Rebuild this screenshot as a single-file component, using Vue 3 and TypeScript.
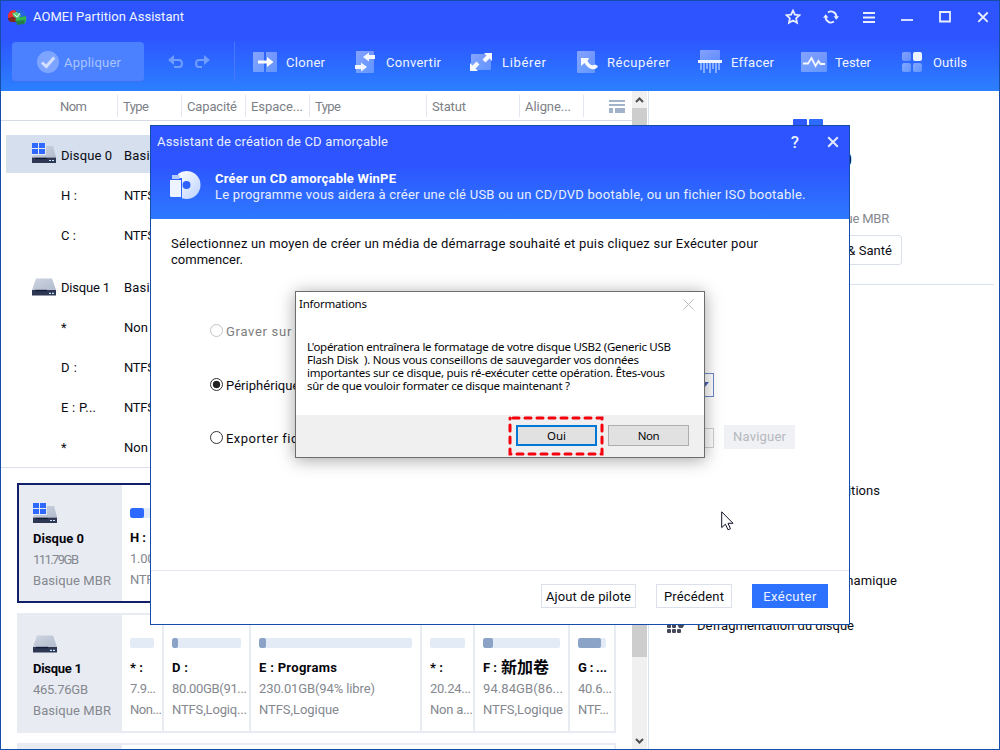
<script setup lang="ts">
import type { ObjectDirective } from 'vue'

/* Spreads a label over the given width through its letter spacing. */
const vFit: ObjectDirective<HTMLElement, number> = {
  mounted(el, binding) {
    if (!binding.value) return
    const count = (el.textContent ?? '').length
    const natural = el.getBoundingClientRect().width
    el.style.letterSpacing = `${(binding.value - natural) / Math.max(count - 1, 1)}px`
  },
}

interface Tool { id: string; label: string; w: number }
const tools: Tool[] = [
  { id: 'clone', label: 'Cloner', w: 39 },
  { id: 'convert', label: 'Convertir', w: 55 },
  { id: 'free', label: 'Libérer', w: 44 },
  { id: 'recover', label: 'Récupérer', w: 63 },
  { id: 'wipe', label: 'Effacer', w: 43 },
  { id: 'test', label: 'Tester', w: 36 },
  { id: 'tools', label: 'Outils', w: 34 },
]

interface Column { label: string; w: number }
const columns: Column[] = [
  { label: 'Nom', w: 27 },
  { label: 'Type', w: 26 },
  { label: 'Capacité', w: 50 },
  { label: 'Espace...', w: 52 },
  { label: 'Type', w: 26 },
  { label: 'Statut', w: 34 },
  { label: 'Aligne...', w: 46 },
]

interface Row { kind: string; name: string; nw: number; type: string; tw: number }
const rows: Row[] = [
  { kind: 'system', name: 'Disque 0', nw: 51, type: 'Basique MBR', tw: 79 },
  { kind: 'volume', name: 'H :', nw: 16, type: 'NTFS', tw: 31 },
  { kind: 'volume', name: 'C :', nw: 15, type: 'NTFS', tw: 31 },
  { kind: 'disk', name: 'Disque 1', nw: 49, type: 'Basique MBR', tw: 79 },
  { kind: 'volume', name: '*', nw: 0, type: 'Non formaté', tw: 73 },
  { kind: 'volume', name: 'D :', nw: 16, type: 'NTFS', tw: 31 },
  { kind: 'volume', name: 'E : P...', nw: 35, type: 'NTFS', tw: 31 },
  { kind: 'volume', name: '*', nw: 0, type: 'Non formaté', tw: 73 },
]

interface Part { name: string; cjk?: string; nw: number; size: string; sw: number; fs: string; fw: number; used: number }
interface Disk { name: string; nw: number; size: string; sw: number; system: boolean; parts: Part[] }
const disks: Disk[] = [
  {
    name: 'Disque 0', nw: 51, size: '111.79GB', sw: 46, system: true,
    parts: [{ name: 'H :', nw: 16, size: '1.00GB', sw: 41, fs: 'NTFS', fw: 31, used: 14 }],
  },
  {
    name: 'Disque 1', nw: 49, size: '465.76GB', sw: 55, system: false,
    parts: [
      { name: '* :', nw: 13, size: '7.9...', sw: 26, fs: 'Non...', fw: 32, used: 0 },
      { name: 'D :', nw: 16, size: '80.00GB(91...', sw: 75, fs: 'NTFS,Logiq...', fw: 75, used: 6 },
      { name: 'E : Programs', nw: 78, size: '230.01GB(94% libre)', sw: 116, fs: 'NTFS,Logique', fw: 80, used: 7 },
      { name: '* :', nw: 13, size: '20.24...', sw: 41, fs: 'Non a...', fw: 43, used: 0 },
      { name: 'F :', cjk: '新加卷', nw: 14, size: '94.84GB(86...', sw: 80, fs: 'NTFS,Logique', fw: 80, used: 10 },
      { name: 'G : ...', nw: 29, size: '40.6...', sw: 34, fs: 'NTF...', fw: 31, used: 23 },
    ],
  },
]

interface Line { text: string; w: number }
const message: Line[] = [
  { text: "L'opération entraînera le formatage de votre disque USB2 (Generic USB", w: 364 },
  { text: 'Flash Disk\u00a0 ). Nous vous conseillons de sauvegarder vos données', w: 332 },
  { text: 'importantes sur ce disque, puis ré-exécuter cette opération. Êtes-vous', w: 358 },
  { text: 'sûr de que vouloir formater ce disque maintenant ?', w: 263 },
]
</script>

<template>
  <div class="window">
    <svg class="defs" width="0" height="0">
      <defs>
        <linearGradient id="soft" x1="0" y1="0" x2="1" y2="1">
          <stop offset="0" stop-color="#fff" stop-opacity=".42" />
          <stop offset="1" stop-color="#fff" stop-opacity=".26" />
        </linearGradient>
        <linearGradient id="metal" x1="0" y1="0" x2="1" y2="1">
          <stop offset="0" stop-color="#ced5e1" />
          <stop offset="1" stop-color="#b2bccd" />
        </linearGradient>
        <linearGradient id="disc" x1="0" y1="0" x2="1" y2="1">
          <stop offset="0" stop-color="#fff" />
          <stop offset="1" stop-color="#b9d0ff" />
        </linearGradient>
        <symbol id="drive" viewBox="0 0 24 20">
          <path d="M4 2.5H20L24 14H0Z" fill="url(#metal)" />
          <path d="M0 14H24V19.5H0Z" fill="#2e3852" />
          <path d="M3 14.5H15" stroke="#141d38" stroke-width="1.4" />
          <path d="M17 17.3H19M20 17.3H22" stroke="#c5eaff" stroke-width="1.2" />
        </symbol>
        <symbol id="sysdrive" viewBox="0 0 24 20">
          <path d="M10 3H21L24 14H0L3 10Z" fill="url(#metal)" />
          <path d="M0 14.5H24V20H0Z" fill="#2e3852" />
          <path d="M3 15.5H15" stroke="#141d38" stroke-width="1.2" />
          <path d="M17 17.5H19M20 17.5H22" stroke="#c5eaff" stroke-width="1.2" />
          <path d="M0 0H14V12H0Z" fill="#e4eaf4" />
          <path d="M0 0H6V5H0ZM7 0H13V5H7ZM0 6H6V11H0ZM7 6H13V11H7Z" fill="#2f68ff" />
        </symbol>
      </defs>
    </svg>

    <header class="top">
      <div class="titlebar">
        <svg class="logo" width="20" height="17" viewBox="0 0 20 17">
          <path d="M1 9Q0 3 6 1L10 2 9 8Z" fill="#f0302c" />
          <path d="M1 9L9 7 9 13H4Q1 12 1 9Z" fill="#832a20" />
          <path d="M9 1Q17-1 19 7L13 9 9 5Z" fill="#2868dc" />
          <path d="M10 9L19 7Q20 13 17 15H11L8 11Z" fill="#31b54c" />
          <path d="M9 12L18 11 17 15 10 16Z" fill="#247b4c" />
          <path d="M5 4L10 3 14 6 11 10 7 8Z" fill="#5ccd79" />
          <path d="M7 5L10 8 13 4" fill="none" stroke="#dff2ff" />
        </svg>
        <span v-fit="151" class="t">AOMEI Partition Assistant</span>
        <div class="controls">
          <svg viewBox="0 0 16 16"><path d="M8 1.6L9.9 5.7 14.4 6.2 11.1 9.3 12 13.8 8 11.5 4 13.8 4.9 9.3 1.6 6.2 6.1 5.7Z" /></svg>
          <svg viewBox="0 0 16 16"><path d="M5 3.4A5.4 5.4 0 0 1 13.4 8M11 12.6A5.4 5.4 0 0 1 2.6 8" /><path class="solid" d="M10.6 7.2H16L13.3 10.8ZM5.4 8.8H0L2.7 5.2Z" /></svg>
          <svg viewBox="0 0 16 16"><path d="M2 4H14M2 8.5H14M2 13H14" /></svg>
          <svg viewBox="0 0 16 16"><path d="M2 11H14" /></svg>
          <svg viewBox="0 0 16 16"><path d="M3 3H13V12.5H3Z" /></svg>
          <svg viewBox="0 0 16 16"><path d="M3.3 3.5L12.7 12.9M12.7 3.5L3.3 12.9" /></svg>
        </div>
      </div>

      <div class="toolbar">
        <div class="apply">
          <svg width="22" height="22" viewBox="0 0 22 22">
            <circle cx="11" cy="11" r="11" fill="#fff" opacity=".28" />
            <path d="M5 11.5L9.3 15.5 17.2 6.5" fill="none" stroke="#d3e0ff" stroke-width="3" />
          </svg>
          <span v-fit="57" class="t">Appliquer</span>
        </div>
        <svg class="undo" width="43" height="14" viewBox="0 0 43 14">
          <g fill="none" stroke="#6f9cff" stroke-width="2">
            <path d="M3 5H11Q14 5 14 8.5T11 12H6" />
            <path d="M38 5H31Q28 5 28 8.5T31 12H34" />
          </g>
          <path d="M0 5L6 0V10ZM42 5L36 0V10Z" fill="#6f9cff" />
        </svg>
        <i class="sep"></i>
        <div v-for="tool in tools" :key="tool.id" :class="['tool', tool.id]">
          <svg v-if="tool.id === 'clone'" width="24" height="24" viewBox="0 0 24 24">
            <path d="M1 2H11V22H1Q0 22 0 21V3Q0 2 1 2ZM13 2H23Q24 2 24 3V21Q24 22 23 22H13Z" fill="url(#soft)" />
            <path d="M5 10.5H14V7L20.5 12 14 17V13.5H5Z" fill="#fff" />
          </svg>
          <svg v-else-if="tool.id === 'convert'" width="20" height="24" viewBox="0 0 20 24">
            <rect x="1" y="1" width="18" height="22" rx="1" fill="url(#soft)" />
            <path d="M8 7L14 2.5V5H20V9H14V11.5ZM12 17L6 12.5V15H0V19H6V21.5Z" fill="#f4f7ff" />
          </svg>
          <svg v-else-if="tool.id === 'free'" width="22" height="24" viewBox="0 0 22 24">
            <rect x="1" y="4" width="20" height="16" rx="1" fill="url(#soft)" />
            <path d="M14 3H22V11L19.5 8.5 15.5 12.5 12.5 9.5 16.5 5.5ZM0 13V21H8L5.5 18.5 9.5 14.5 6.5 11.5 2.5 15.5Z" fill="#f6f9ff" />
          </svg>
          <svg v-else-if="tool.id === 'recover'" width="21" height="24" viewBox="0 0 21 24">
            <rect x="0" y="1" width="18" height="22" rx="1" fill="url(#soft)" />
            <path d="M4 8H12L10.5 11Q14 17 18 14.5L21 16Q19 20 14.5 19 10.5 18 7.5 13L4 16Z" fill="#f6f9ff" />
          </svg>
          <svg v-else-if="tool.id === 'wipe'" width="24" height="24" viewBox="0 0 24 24">
            <path d="M2 1Q2 0 3 0H21Q22 0 22 1V10H2Z" fill="url(#soft)" />
            <path d="M3 13V20M6 13V23M9 13V19M12 13V23M15 13V19M18 13V23M21 13V20" stroke="#8fb4ff" stroke-width="1.8" />
            <path d="M0 10H24V13H0Z" fill="#edf3ff" />
          </svg>
          <svg v-else-if="tool.id === 'test'" width="26" height="24" viewBox="0 0 26 24">
            <rect x="0" y="2" width="26" height="20" rx="1" fill="url(#soft)" />
            <path d="M2 13.5H7L10.5 8 14.5 16 17.5 11 19.5 14H24" fill="none" stroke="#f6f9ff" stroke-width="1.8" />
          </svg>
          <svg v-else width="20" height="24" viewBox="0 0 20 24">
            <rect x="0" y="2" width="9" height="9" rx="2" fill="url(#soft)" />
            <rect x="11" y="2" width="9" height="9" rx="2" fill="#edf2ff" />
            <rect x="0" y="13" width="9" height="9" rx="2" fill="url(#soft)" />
            <rect x="11" y="13" width="9" height="9" rx="2" fill="url(#soft)" />
          </svg>
          <span v-fit="tool.w" class="t">{{ tool.label }}</span>
        </div>
      </div>
    </header>

    <div class="main">
      <section class="left">
        <div class="content">
          <div class="thead">
            <div v-for="(c, i) in columns" :key="i" class="th"><span v-fit="c.w" class="t">{{ c.label }}</span></div>
            <svg class="layout" width="16" height="13" viewBox="0 0 16 13">
              <path d="M0 0H16V2H0ZM0 4H16V6H0ZM0 8H4V13H0ZM6 8H16V13H6Z" fill="#a0b3cb" />
            </svg>
          </div>
          <div class="rows">
            <div v-for="(r, i) in rows" :key="i" :class="['row', r.kind]">
              <div class="ricon">
                <svg v-if="r.kind === 'system'" width="24" height="20"><use href="#sysdrive" /></svg>
                <svg v-if="r.kind === 'disk'" width="24" height="20"><use href="#drive" /></svg>
              </div>
              <div class="rname"><span v-fit="r.nw" class="t">{{ r.name }}</span></div>
              <span v-fit="r.tw" class="t">{{ r.type }}</span>
            </div>
          </div>
          <div class="cards">
            <div v-for="d in disks" :key="d.name" :class="['card', { active: d.system }]">
              <div class="dinfo">
                <svg width="24" height="20"><use :href="d.system ? '#sysdrive' : '#drive'" /></svg>
                <b v-fit="d.nw" class="t">{{ d.name }}</b>
                <span v-fit="d.sw" class="t">{{ d.size }}</span>
                <span v-fit="78" class="t">Basique MBR</span>
              </div>
              <div v-for="(p, i) in d.parts" :key="i" class="part">
                <div class="bar"><div class="used" :style="{ width: p.used + 'px' }"></div></div>
                <b class="pname"><span v-fit="p.nw" class="t">{{ p.name }}</span><span v-if="p.cjk" class="cjk">{{ p.cjk }}</span></b>
                <span v-fit="p.sw" class="t">{{ p.size }}</span>
                <span v-fit="p.fw" class="t">{{ p.fs }}</span>
              </div>
            </div>
            <div class="card"><div class="dinfo"></div></div>
          </div>
        </div>
        <div class="scroll">
          <svg width="15" height="17" viewBox="0 0 15 17"><path d="M4 11L7.5 7.5 11 11" /></svg>
          <div class="thumb"></div>
          <svg width="15" height="17" viewBox="0 0 15 17"><path d="M4 7L7.5 10.5 11 7" /></svg>
        </div>
      </section>

      <aside class="side">
        <svg class="win" width="30" height="30" viewBox="0 0 30 30">
          <rect width="14" height="14" rx="1" fill="#2d59ff" /><rect x="16" width="14" height="14" rx="1" fill="#2d6aff" />
          <rect y="16" width="14" height="14" rx="1" fill="#2d6aff" /><rect x="16" y="16" width="14" height="14" rx="1" fill="#2d78ff" />
        </svg>
        <div class="dname"><b v-fit="88" class="t">Disque 0</b></div>
        <div class="dtype"><span v-fit="75" class="t">Basique MBR</span></div>
        <div class="health"><span v-fit="108" class="t">Propriétés &amp; Santé</span></div>
        <div class="ops">
          <div class="op align"><span v-fit="160" class="t">Récupération des partitions</span></div>
          <div class="op dyn"><span v-fit="173" class="t">Gestion du disque dynamique</span></div>
          <div class="op">
            <svg width="18" height="18" viewBox="0 0 18 18" fill="#444858">
              <rect x="0" y="0" width="4" height="4" rx="1" /><rect x="5" y="0" width="4" height="4" rx="1" />
              <rect x="0" y="9" width="4" height="4" rx="1" /><rect x="5" y="9" width="4" height="4" rx="1" /><path d="M10 9H18L15.5 13H12Z" />
              <rect x="0" y="14" width="4" height="4" rx="1" /><rect x="5" y="14" width="4" height="4" rx="1" /><rect x="10" y="14" width="4" height="4" rx="1" />
            </svg>
            <span v-fit="157" class="t">Défragmentation du disque</span>
          </div>
        </div>
      </aside>
    </div>

    <div class="dialog">
      <div class="dhead">
        <div class="dtitle">
          <span v-fit="231" class="t">Assistant de création de CD amorçable</span>
          <span class="help">?</span>
          <svg width="12" height="12" viewBox="0 0 12 12"><path d="M1.2 1.2L10.8 10.8M10.8 1.2L1.2 10.8" stroke="#e2e9ff" stroke-width="2" /></svg>
        </div>
        <div class="dintro">
          <svg width="32" height="30" viewBox="0 0 32 30">
            <path fill-rule="evenodd" d="M17.5 1A14 14 0 0 1 17.5 29A14 14 0 0 1 13 28.2V8H9V4A14 14 0 0 1 17.5 1ZM17.5 11A4 4 0 1 0 17.5 19A4 4 0 0 0 17.5 11Z" fill="url(#disc)" />
            <path d="M3 5H10.5V9H3Z" fill="#b4caff" />
            <path d="M1 10H12V27H2.5Q1 27 1 25.5Z" fill="#edf3ff" />
          </svg>
          <div>
            <b v-fit="181" class="t">Créer un CD amorçable WinPE</b>
            <span v-fit="590" class="t">Le programme vous aidera à créer une clé USB ou un CD/DVD bootable, ou un fichier ISO bootable.</span>
          </div>
        </div>
      </div>
      <div class="dbody">
        <div class="lead">
          <span v-fit="587" class="t">Sélectionnez un moyen de créer un média de démarrage souhaité et puis cliquez sur Exécuter pour</span>
          <span v-fit="72" class="t">commencer.</span>
        </div>
        <div class="opt off"><i class="radio"></i><span v-fit="121" class="t">Graver sur CD/DVD</span></div>
        <div class="opt"><i class="radio on"></i><span v-fit="101" class="t">Périphérique USB</span>
          <div class="combo"><svg width="10" height="6" viewBox="0 0 10 6"><path d="M0 0H10L5 6Z" fill="#4560b8" /></svg></div>
        </div>
        <div class="opt"><i class="radio"></i><span v-fit="120" class="t">Exporter fichier ISO</span>
          <div class="path"></div>
          <div class="browse"><span v-fit="53">Naviguer</span></div>
        </div>
      </div>
      <div class="dfoot">
        <button class="driver"><span v-fit="85" class="t">Ajout de pilote</span></button>
        <button><span v-fit="60" class="t">Précédent</span></button>
        <button class="primary"><span v-fit="53" class="t">Exécuter</span></button>
      </div>
    </div>

    <div class="alert">
      <div class="atitle">
        <span v-fit="68" class="t">Informations</span>
        <svg width="11" height="11" viewBox="0 0 11 11"><path d="M.5.5L10.5 10.5M10.5.5L.5 10.5" stroke="#bcbcbc" /></svg>
      </div>
      <div class="atext">
        <div v-for="l in message" :key="l.text"><span v-fit="l.w" class="t">{{ l.text }}</span></div>
      </div>
      <div class="afoot">
        <button class="yes"><span v-fit="19" class="t">Oui</span></button>
        <button><span v-fit="22" class="t">Non</span></button>
        <svg class="mark" width="96" height="40" viewBox="0 0 96 40"><rect x="2" y="2" width="92" height="36" fill="none" stroke="#f5000c" stroke-width="3" stroke-linecap="round" stroke-dasharray="6 6" stroke-dashoffset="-3" /></svg>
      </div>
    </div>

    <svg class="cursor" width="13" height="20" viewBox="0 0 13 20">
      <path d="M.7.8V16.6L4.4 13.2 7 18.8 9.5 17.7 7 12.3H12Z" fill="#fff" stroke="#10102a" />
    </svg>
  </div>
</template>

<style>
body { overflow: hidden; background: #fff; }
</style>

<style scoped>
* { box-sizing: border-box; }
.window {
  position: relative; width: 1000px; height: 750px; overflow: hidden; background: #fff;
  border: 1px solid #154ea8; display: flex; flex-direction: column;
  font: 13px/16px Roboto, "Noto Sans CJK SC", sans-serif; color: #0b0b12;
}
.defs { position: absolute; }
.t { display: inline-block; white-space: nowrap; }
.toolbar .t, .main .t, .dintro .t, .opt .t, .dfoot .t { transform: translateY(1px); }
svg { flex: none; display: block; }

.top { height: 90px; flex: none; background: linear-gradient(#2d54ff 0, #2d54ff 36px, #2b80ff 90px); color: #f0f4ff; }
.titlebar { height: 32px; display: flex; align-items: center; padding-left: 6px; }
.logo { margin-right: 6px; }
.controls { margin-left: auto; display: flex; gap: 22px; padding-right: 8px; }
.controls svg { width: 16px; height: 16px; fill: none; stroke: #e9eeff; stroke-width: 1.8; }
.controls .solid { fill: #e9eeff; stroke: none; }
.toolbar { display: flex; align-items: center; height: 58px; padding: 0 0 0 11px; }
.apply {
  width: 132px; height: 40px; border-radius: 4px; background: #4b81ff; border-bottom: 1px solid #3e70ee;
  display: flex; align-items: center; gap: 5px; padding: 1px 0 0 25px; color: #a9c4ff;
}
.undo { margin-left: 24px; }
.sep { width: 1px; height: 40px; background: #4a77ff; margin: 0 18px 0 23px; }
.tool { display: flex; align-items: center; gap: 9px; }
.clone { width: 102px; }
.convert { width: 115px; gap: 11px; }
.free { width: 107px; gap: 10px; }
.recover { width: 121px; }
.wipe { width: 103px; }
.test { width: 101px; gap: 8px; }
.tools { gap: 11px; }

.main { flex: 1; display: flex; min-height: 0; }
.left { width: 648px; flex: none; display: flex; border-right: 1px solid #dbe2ef; }
.content { width: 631px; flex: none; overflow: hidden; }
.thead {
  height: 30px; display: grid; align-items: center; border-bottom: 1px solid #d5dbe6; color: #7d8087;
  grid-template-columns: 117px 64px 64px 64px 117px 93px 64px 48px;
}
.th { height: 22px; padding: 3px 0 0 5px; border-right: 1px solid #e2e6f0; }
.th:first-child { padding-left: 59px; }
.layout { margin: 2px 0 0 25px; }
.rows { padding: 14px 0 0 5px; height: 347px; border-bottom: 1px solid #dbdfe9; }
.row { height: 40px; display: flex; align-items: center; }
.row.system { height: 38px; margin-bottom: 2px; padding-top: 2px; background: #d5dfee; }
.row.disk { margin-top: 12px; }
.ricon { width: 55px; padding-left: 26px; }
.row.system .ricon { padding-bottom: 4px; }
.row.disk .ricon { padding-bottom: 3px; }
.rname { width: 63px; }

.cards { padding: 15px 0 0 16px; }
.card {
  width: 599px; height: 120px; margin-bottom: 10px; border: 2px solid #e8ebf2; display: grid;
  grid-template-columns: 103px 42px 87px 171px 53px 95px 44px; color: #85888f;
}
.card.active { border-color: #12206a; grid-template-columns: 103px 490px; }
.dinfo { background: #e8ebf2; padding: 18px 0 0 14px; display: flex; flex-direction: column; align-items: flex-start; gap: 5px; }
.dinfo b, .part b { color: #06060c; }
.dinfo b { margin-top: 2px; }
.part { border-right: 2px solid #e8ebf2; padding: 23px 8px 0; display: flex; flex-direction: column; align-items: flex-start; gap: 5px; min-width: 0; }
.part:last-child { border-right: 0; padding-right: 8px; }
.bar { width: 100%; height: 10px; border-radius: 2px; overflow: hidden; background: #e3ebf6; margin-bottom: 6px; }
.used { height: 10px; border-radius: 2px; background: #8ba3c7; }
.active .bar { width: 62px; }
.active .used { background: #2d68ff; }
.pname { height: 16px; display: flex; gap: 4px; white-space: nowrap; }
.cjk { font: 700 16px/15px "Noto Sans CJK SC", sans-serif; }

.scroll { width: 15px; background: #f0f0f0; display: flex; flex-direction: column; }
.scroll path { fill: none; stroke: #505050; stroke-width: 2; }
.thumb { height: 549px; background: #cdcdcd; margin-bottom: 75px; }

.side { flex: 1; display: flex; flex-direction: column; padding-right: 5px; }
.win { margin: 28px 0 0 144px; }
.dname { height: 30px; width: 204px; margin: -5px 0 0 115px; padding-top: 4px; font-size: 19px; line-height: 22px; }
.dtype { color: #85888f; padding: 54px 105px 0 0; text-align: right; height: 71px; margin: -18px 0 8px; }
.health { width: 142px; height: 30px; margin: 0 0 19px 111px; border: 1px solid #d9dfeb; border-radius: 3px; text-align: right; padding: 6px 9px 0 0; white-space: nowrap; }
.ops { border-top: 1px solid #dbe2ef; display: flex; flex-direction: column; padding-top: 197px; }
.op { height: 45px; display: flex; gap: 12px; padding-left: 18px; }
.op svg { margin-top: -2px; }
.op.align { height: 90px; padding-left: 71px; }
.op.dyn { padding-left: 75px; }

.dialog { position: absolute; left: 149px; top: 124px; width: 700px; height: 500px; background: #fff; border: 1px solid #154ea8; display: flex; flex-direction: column; }
.dhead { height: 93px; background: linear-gradient(#2d54ff 0, #2d54ff 38px, #2d79ff 93px); color: #e9efff; }
.dtitle { height: 32px; display: flex; align-items: center; padding-left: 6px; }
.help { margin-left: auto; font-size: 17px; font-weight: 500; margin-right: 28px; }
.dtitle svg { margin-right: 10px; }
.dintro { display: flex; padding: 12px 0 0 18px; gap: 14px; }
.dintro > div { display: flex; flex-direction: column; align-items: flex-start; }
.dintro b { color: #fff; }
.dbody { flex: 1; padding: 17px 0 0 20px; }
.lead { display: flex; flex-direction: column; align-items: flex-start; height: 79px; }
.opt { height: 53px; display: flex; align-items: center; padding-left: 39px; }
.opt.off { color: #7d7d80; height: 32px; margin-bottom: 11px; }
.radio { width: 13px; height: 13px; margin: 0 3px 1px 0; flex: none; border: 1px solid #333; border-radius: 50%; background: #fff; }
.off .radio { border-color: #c3c3c3; }
.radio.on { background: radial-gradient(circle, #222 3.4px, #fff 4.1px); }
.combo { margin-left: auto; margin-right: 135px; width: 370px; height: 24px; border: 1px solid #6c89cc; display: flex; align-items: center; justify-content: flex-end; padding-right: 4px; }
.path { margin-left: auto; width: 370px; height: 20px; border: 1px solid #cfcfd2; }
.browse { margin: 0 54px 1px 10px; width: 71px; height: 24px; background: #eff1f4; color: #b5b8be; padding: 4px 9px; white-space: nowrap; }
.dfoot { height: 54px; border-top: 1px solid #e3e6f0; display: flex; justify-content: flex-end; gap: 20px; padding: 13px 21px 0 0; }
button { font: inherit; color: inherit; padding: 0; margin: 0; display: flex; align-items: center; justify-content: center; }
.dfoot button { width: 76px; height: 24px; background: #fff; border: 1px solid #dbe0ea; }
.dfoot .driver { width: 95px; }
.dfoot .primary { background: #2d71ff; border-color: #2d71ff; color: #eef3ff; }

.alert {
  position: absolute; left: 294px; top: 290px; width: 410px; height: 167px; background: #fff; border: 1px solid #6d6d6d;
  box-shadow: 0 2px 16px rgba(0, 0, 0, .36); display: flex; flex-direction: column; font-family: "Noto Sans", sans-serif; font-size: 11.5px; color: #050508;
}
.atitle { height: 24px; display: flex; align-items: center; justify-content: space-between; padding: 0 10px 0 3px; }
.atext { flex: 1; padding: 24px 0 0 11px; line-height: 13px; }
.atext > div { height: 13px; }
.atext .t { vertical-align: top; }
.afoot { position: relative; height: 42px; background: #f0f0f0; display: flex; justify-content: flex-end; gap: 11px; padding: 10px 15px 0 0; }
.afoot button { width: 81px; height: 21px; background: #e1e1e1; border: 1px solid #adadad; }
.afoot .yes { border: 2px solid #0078d7; }
.mark { position: absolute; right: 100px; top: 1px; }
.cursor { position: absolute; left: 720px; top: 510px; }
</style>
